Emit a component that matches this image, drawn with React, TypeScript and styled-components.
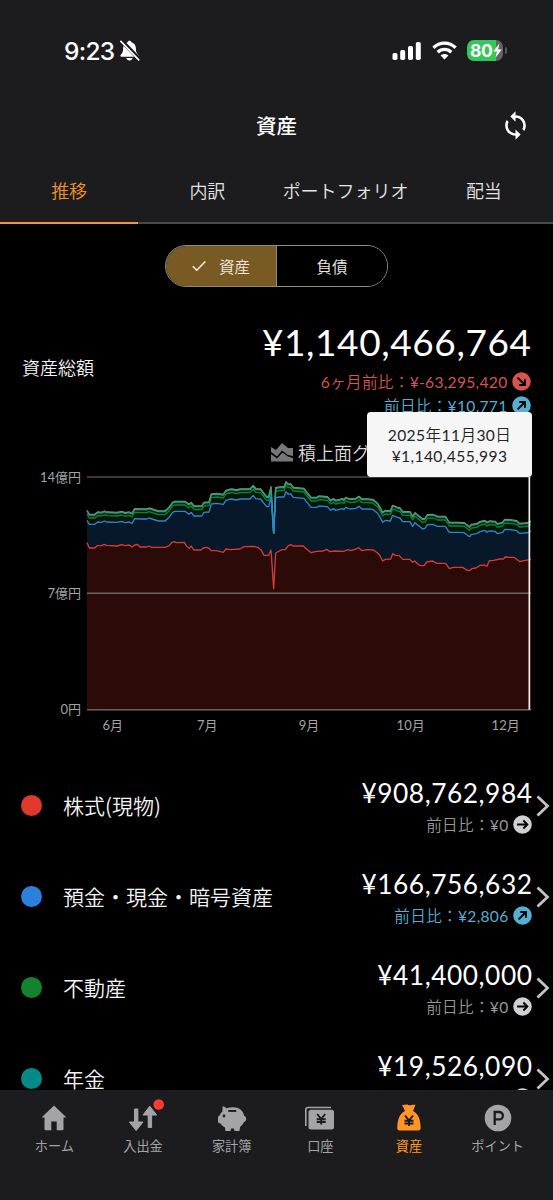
import React from "react";
import styled, { createGlobalStyle } from "styled-components";

const Global = createGlobalStyle`
  * { box-sizing: border-box; }
  body { margin: 0; background: #000; }
`;

const jp = `"Noto Sans CJK JP", sans-serif`;
const num = `Lato, "Noto Sans CJK JP", sans-serif`;

const Screen = styled.div`
  width: 553px;
  height: 1200px;
  overflow: hidden;
  display: flex;
  flex-direction: column;
  background: #000;
  color: #fff;
  font-family: ${num};
`;

const Header = styled.header`
  flex: none;
  height: 224px;
  background: #1c1c1e;
  display: flex;
  flex-direction: column;
`;

const StatusBar = styled.div`
  height: 80px;
  padding: 21px 46px 0 64px;
  display: flex;
  justify-content: space-between;
  align-items: center;
`;

const Cluster = styled.div<{ $gap: number }>`
  display: flex;
  align-items: center;
  gap: ${(p) => p.$gap}px;
`;

const Clock = styled.span`
  font: 550 24.5px/30px Inter, sans-serif;
  letter-spacing: -0.7px;
`;

const Battery = styled.div`
  display: flex;
  align-items: center;
  gap: 2px;
`;

const BatteryBody = styled.div`
  width: 36px;
  height: 21px;
  border-radius: 7px;
  background: linear-gradient(90deg, #34c759 0 29px, #636366 29px);
  display: flex;
  align-items: center;
  padding-left: 3px;
  font: 650 17.5px/21px Inter, sans-serif;
  letter-spacing: -0.3px;
`;

const BatteryCap = styled.div`
  width: 2px;
  height: 7px;
  border-radius: 0 2px 2px 0;
  background: #59595c;
`;

const TitleBar = styled.div`
  height: 90px;
  display: grid;
  grid-template-columns: 1fr auto 1fr;
  align-items: center;
  padding: 0 22px;
  & > svg { grid-column: 3; justify-self: end; }
`;

const Title = styled.h1`
  grid-column: 2;
  margin: 0;
  font: 500 20.5px/30px ${jp};
`;

const Tabs = styled.nav`
  height: 54px;
  display: grid;
  grid-template-columns: repeat(4, 1fr);
`;

const Tab = styled.div<{ $active?: boolean }>`
  display: flex;
  align-items: center;
  justify-content: center;
  height: 54px;
  white-space: nowrap;
  font: 350 18px/26px ${jp};
  color: ${(p) => (p.$active ? "#f0922b" : "#e4e4e5")};
  border-bottom: 2px solid ${(p) => (p.$active ? "#f0953a" : "#48484a")};
  padding-bottom: 12px;
`;

const Main = styled.main`
  height: 866px;
  flex: none;
  overflow: hidden;
  display: flex;
  flex-direction: column;
`;

const Segments = styled.div`
  align-self: center;
  flex: none;
  width: 223px;
  height: 42px;
  margin: 21px 0 0 0;
  border: 1px solid #8e8a86;
  border-radius: 21px;
  overflow: hidden;
  display: flex;
`;

const Segment = styled.div<{ $on?: boolean }>`
  flex: 1;
  display: flex;
  align-items: center;
  justify-content: center;
  gap: 13px;
  font: 350 15.5px/22px ${jp};
  color: #f0e8e0;
  background: ${(p) => (p.$on ? "#7a5a23" : "#000")};
  & + & { border-left: 1px solid #8e8a86; }
`;

const Summary = styled.section`
  flex: none;
  height: 141px;
  margin-top: 30px;
  padding: 0 22px;
  display: flex;
  justify-content: space-between;
`;

const SummaryLabel = styled.div`
  padding-top: 37px;
  font: 350 18px/26px ${jp};
  color: #f2f2f2;
`;

const Figures = styled.div`
  display: flex;
  flex-direction: column;
  align-items: flex-end;
`;

const Total = styled.div`
  height: 52px;
  font-size: 37px;
  line-height: 50px;
  letter-spacing: 0.6px;
  margin-right: -0.6px;
`;

const Change = styled.div<{ $color: string }>`
  display: flex;
  align-items: center;
  gap: 4.5px;
  height: 24px;
  font-family: Lato, ${jp};
  font-size: 15.6px;
  line-height: 24px;
  letter-spacing: 0.3px;
  color: ${(p) => p.$color};
`;

const Caption = styled.span`
  font-family: ${jp};
  font-weight: 350;
`;

const ChartKind = styled.div`
  flex: none;
  height: 20px;
  margin-top: -16px;
  padding-left: 271px;
  display: flex;
  align-items: center;
  gap: 5px;
  font: 350 18px/20px ${jp};
  color: #d8d8da;
  white-space: nowrap;
`;

const ChartBox = styled.div`
  position: relative;
  flex: none;
  height: 280px;
  margin-top: 3px;
  & > svg { display: block; }
`;

const Tooltip = styled.div`
  position: absolute;
  left: 367px;
  top: -53px;
  width: 165px;
  height: 65px;
  padding-top: 2px;
  border-radius: 4px;
  background: #f6f6f6;
  color: #242426;
  display: flex;
  flex-direction: column;
  align-items: center;
  justify-content: center;
  font-size: 15.6px;
  line-height: 21px;
  letter-spacing: 0.4px;
`;

const AssetList = styled.section`
  flex: none;
  margin-top: 15px;
`;

const AssetRow = styled.div`
  height: 91px;
  padding: 0 3px 0 21px;
  display: flex;
  align-items: center;
`;

const Dot = styled.span<{ $color: string }>`
  width: 21px;
  height: 21px;
  border-radius: 50%;
  background: ${(p) => p.$color};
`;

const AssetName = styled.div`
  flex: 1;
  margin-left: 21px;
  padding-bottom: 2px;
  font: 350 21px/30px ${jp};
  color: #f4f4f4;
`;

const AssetFigures = styled(Figures)`
  padding-top: 2px;
  margin-right: 4px;
`;

const Amount = styled.div`
  height: 35px;
  font-size: 26.3px;
  line-height: 32px;
  letter-spacing: 0.55px;
  margin-right: -0.5px;
`;

const FlatIcon = styled.span`
  display: flex;
  color: #cfcfd4;
`;

const BottomBar = styled.nav`
  flex: none;
  height: 110px;
  padding: 10px 11px 0 10px;
  background: #1c1c1e;
  display: grid;
  grid-template-columns: repeat(6, 1fr);
`;

const BarItem = styled.div<{ $active?: boolean }>`
  display: flex;
  flex-direction: column;
  align-items: center;
  gap: 1px;
  font: 400 13.2px/22px ${jp};
  white-space: nowrap;
  color: ${(p) => (p.$active ? "#ff9526" : "#a4a4a7")};
  & > svg { overflow: visible; }
`;

/* Chart coordinates: three units per pixel, zero value at y=734. */
const red =
  "261,233 268,249 284,249 292,242 305,242 312,238 320,241 352,243 365,239 375,242 388,240 396,246 404,240 412,238 420,246 440,246 447,243 455,247 495,247 508,242 515,233 522,230 530,233 553,232 560,244 568,250 574,243 581,255 603,255 610,249 620,247 627,250 634,257 650,257 670,262 678,252 690,254 720,252 732,245 762,244 775,248 783,254 792,271 806,271 813,255 821,371 827,264 838,258 846,254 856,254 864,243 872,239 880,243 910,243 917,250 933,263 950,259 970,258 980,253 990,260 1005,258 1030,259 1045,254 1052,257 1068,252 1076,248 1086,257 1100,254 1120,255 1133,264 1140,273 1148,288 1156,283 1172,282 1178,266 1186,271 1198,272 1208,283 1230,283 1238,292 1244,288 1258,301 1272,302 1280,291 1298,288 1310,295 1337,295 1348,311 1360,307 1388,307 1400,315 1409,317 1415,311 1428,309 1440,301 1454,300 1461,304 1468,287 1480,286 1500,282 1510,282 1515,276 1530,277 1542,277 1560,290 1572,287 1593,283";
const blue =
  "261,166 268,178 284,178 293,171 305,172 313,168 320,171 352,172 365,169 375,173 388,171 396,175 404,161 420,162 440,162 447,159 475,168 495,168 508,156 518,142 524,139 555,139 567,148 574,142 582,153 605,153 612,142 627,141 634,117 650,115 670,118 678,106 687,103 695,102 710,105 720,102 750,102 760,91 767,101 782,102 792,115 800,125 806,125 813,95 821,205 827,98 838,96 852,96 858,80 864,87 872,87 880,97 912,100 917,107 933,127 950,127 957,123 982,125 992,136 1000,131 1007,136 1027,131 1032,134 1037,127 1050,132 1068,130 1077,124 1086,132 1102,132 1118,133 1132,144 1139,155 1148,172 1156,166 1171,168 1178,151 1192,157 1200,159 1208,170 1230,170 1238,184 1245,173 1268,192 1275,190 1282,179 1298,178 1312,184 1336,184 1348,202 1370,202 1393,203 1408,215 1415,208 1430,206 1440,200 1454,196 1461,202 1468,198 1485,199 1492,206 1508,202 1514,193 1530,194 1550,197 1558,205 1575,204 1585,202 1593,198";

/* Property and pension sit a nearly constant amount above the cash line,
   except on the day of the dip, when they drop out. */
const above = (points: string, by: number) =>
  points
    .split(" ")
    .map((p) => {
      const [x, y] = p.split(",").map(Number);
      return `${x},${y - (x === 821 ? 0 : by)}`;
    })
    .join(" ");
const green = above(blue, 19);
const teal = above(blue, 28);
const top = above(blue, 30);
const area = (p: string) => `${p} 1593,734 261,734`;

const Chart = () => (
  <svg width="553" height="280" viewBox="0 0 1659 840" fontFamily={num} fontSize="39" fill="#a3a3a6">
    <path d="M261 36H1593" stroke="#4c4c4e" strokeWidth="5" />
    <polygon points={area(top)} fill="#06221f" />
    <polygon points={area(green)} fill="#021804" />
    <polygon points={area(blue)} fill="#07182a" />
    <polygon points={area(red)} fill="#2c0a08" />
    <g fill="none" strokeWidth="4" strokeLinejoin="round">
      <polyline points={red} stroke="#d43c33" />
      <polyline points={green} stroke="#128031" />
      <polyline points={top} stroke="#8d9a62" />
      <polyline points={teal} stroke="#2a9c80" />
      <polyline points={blue} stroke="#2f83d6" />
    </g>
    <path d="M261 385H1593M261 734H1593" stroke="#6a6264" strokeWidth="4.5" />
    <path d="M1588 36V734" stroke="#f4eeee" strokeWidth="5" />
    <g textAnchor="end">
      <text x="243" y="52">14億円</text>
      <text x="243" y="399">7億円</text>
      <text x="243" y="747">0円</text>
    </g>
    <g textAnchor="middle">
      <text x="338" y="794">6月</text>
      <text x="622" y="794">7月</text>
      <text x="927" y="794">9月</text>
      <text x="1232" y="794">10月</text>
      <text x="1517" y="794">12月</text>
    </g>
  </svg>
);

const angles = { down: 45, up: -45, flat: 0 };
type Trend = keyof typeof angles;

const TrendIcon = ({ trend }: { trend: Trend }) => (
  <svg width="19" height="19" viewBox="0 0 18 18">
    <circle cx="9" cy="9" r="8.800" fill="currentColor" />
    <g transform={`rotate(${angles[trend]} 9 9)`} fill="none" stroke="#000" strokeWidth="1.800">
      <path d="M3.800 9H13.400M9.800 5.200L13.600 9L9.800 12.800" />
    </g>
  </svg>
);

const colors = { down: "#d65350", up: "#56aed2", flat: "#98989b" };

const assets: { name: string; dot: string; amount: string; diff: string; trend: Trend }[] = [
  { name: "株式(現物)", dot: "#e0392b", amount: "¥908,762,984", diff: "¥0", trend: "flat" },
  { name: "預金・現金・暗号資産", dot: "#2b80dc", amount: "¥166,756,632", diff: "¥2,806", trend: "up" },
  { name: "不動産", dot: "#12842f", amount: "¥41,400,000", diff: "¥0", trend: "flat" },
  { name: "年金", dot: "#058b87", amount: "¥19,526,090", diff: "¥0", trend: "flat" },
];

const Yen = ({ x, y }: { x: number; y: number }) => (
  <path
    d={`M${x - 4} ${y - 5}l4 5l4 -5M${x} ${y}v5.500M${x - 4.5} ${y + 0.3}h9M${x - 4.5} ${y + 3}h9`}
    fill="none"
    stroke="#1c1c1e"
    strokeWidth="1.900"
  />
);

const BarIcon = ({ children }: { children: React.ReactNode }) => (
  <svg width="32" height="34" viewBox="0 0 32 34" fill="currentColor">
    {children}
  </svg>
);

export default function App() {
  return (
    <Screen>
      <Global />
      <Header>
        <StatusBar>
          <Cluster $gap={5}>
            <Clock>9:23</Clock>
            <svg width="20" height="21" viewBox="0 0 20 21">
              <path d="M9.500 .8c-1 0-1.700.6-1.900 1.400C4.600 3.100 3.200 5.400 3.100 8.500c0 4-1.200 5-2.500 6.500-.5.700-.1 1.700.7 1.700h16.400c.8 0 1.200-1 .7-1.700-1.300-1.500-2.500-2.500-2.500-6.500 0-3.100-1.500-5.400-4.500-6.300-.2-.8-.9-1.400-1.900-1.400zM6.300 18h6.400c-.3 1.500-1.500 2.500-3.200 2.500s-2.900-1-3.200-2.500z" fill="#fff" />
              <path d="M1.600 .8L19.400 19.300" stroke="#1c1c1e" strokeWidth="4" />
              <path d="M.9 1.400L18.700 19.900" stroke="#fff" strokeWidth="1.700" strokeLinecap="round" />
            </svg>
          </Cluster>
          <Cluster $gap={10}>
            <svg width="30" height="20" viewBox="0 0 30 20" fill="#fff">
              <rect x="0.500" y="12" width="5" height="7" rx="1.700" />
              <rect x="8.200" y="9" width="5" height="10" rx="1.700" />
              <rect x="16" y="5" width="5" height="14" rx="1.700" />
              <rect x="23.800" y="1" width="5" height="18" rx="1.700" />
            </svg>
            <svg width="25" height="19" viewBox="0 0 25 19" fill="none" stroke="#fff" strokeWidth="3.300">
              <path d="M1.400 6.800C7.800.6 17.200.6 23.600 6.800" />
              <path d="M5.700 11.200C9.700 7.400 15.300 7.400 19.300 11.200" />
              <path d="M12.500 18.600L8.600 14.500c2.200-2 5.600-2 7.800 0z" fill="#fff" stroke="none" />
            </svg>
            <Battery>
              <BatteryBody>
                80
                <svg width="9" height="15" viewBox="0 0 9 15">
                  <path d="M6.300.5L.3 8.400h3.500L2.700 14.500L8.700 6.500H5.200z" fill="#fff" />
                </svg>
              </BatteryBody>
              <BatteryCap />
            </Battery>
          </Cluster>
        </StatusBar>
        <TitleBar>
          <Title>資産</Title>
          <svg width="31" height="31" viewBox="0 0 24 24" fill="#fff">
            <path d="M12 4V1L8 5l4 4V6c3.310 0 6 2.690 6 6 0 1.010-.25 1.970-.7 2.800l1.460 1.460C19.540 15.030 20 13.570 20 12c0-4.420-3.580-8-8-8zm0 14c-3.310 0-6-2.690-6-6 0-1.010.25-1.970.7-2.800L5.240 7.740C4.460 8.970 4 10.430 4 12c0 4.420 3.580 8 8 8v3l4-4-4-4v3z" />
          </svg>
        </TitleBar>
        <Tabs>
          <Tab $active>推移</Tab>
          <Tab>内訳</Tab>
          <Tab>ポートフォリオ</Tab>
          <Tab>配当</Tab>
        </Tabs>
      </Header>
      <Main>
        <Segments>
          <Segment $on>
            <svg width="14" height="12" viewBox="0 0 14 12" fill="none" stroke="#f8eee4" strokeWidth="1.500">
              <path d="M.8 6.200L4.800 10.200L13.300 1.500" />
            </svg>
            資産
          </Segment>
          <Segment>負債</Segment>
        </Segments>
        <Summary>
          <SummaryLabel>資産総額</SummaryLabel>
          <Figures>
            <Total>¥1,140,466,764</Total>
            <Change $color={colors.down}>
              <span>6<Caption>ヶ月前比：</Caption>¥-63,295,420</span>
              <TrendIcon trend="down" />
            </Change>
            <Change $color={colors.up}>
              <span><Caption>前日比：</Caption>¥10,771</span>
              <TrendIcon trend="up" />
            </Change>
          </Figures>
        </Summary>
        <ChartKind>
          <svg width="22" height="20" viewBox="0 0 22 20" fill="#77777a">
            <path d="M0 5l5 3l6-7l6 5h5v8l-5-1l-6-4.500l-5 6L0 10z" />
            <path d="M0 12l6 4.500l5.500-6l5.500 4l5 1.500v3.500H0z" />
          </svg>
          積上面グラフ
        </ChartKind>
        <ChartBox>
          <Chart />
          <Tooltip>
            <span>2025<Caption>年</Caption>11<Caption>月</Caption>30<Caption>日</Caption></span>
            <span>¥1,140,455,993</span>
          </Tooltip>
        </ChartBox>
        <AssetList>
          {assets.map((a) => (
            <AssetRow key={a.name}>
              <Dot $color={a.dot} />
              <AssetName>{a.name}</AssetName>
              <AssetFigures>
                <Amount>{a.amount}</Amount>
                <Change $color={colors[a.trend]}>
                  <span><Caption>前日比：</Caption>{a.diff}</span>
                  {a.trend === "flat" ? (
                    <FlatIcon>
                      <TrendIcon trend="flat" />
                    </FlatIcon>
                  ) : (
                    <TrendIcon trend={a.trend} />
                  )}
                </Change>
              </AssetFigures>
              <svg width="14" height="22" viewBox="0 0 14 22" fill="none" stroke="#c4c4c8" strokeWidth="2.800">
                <path d="M1.500 1.500L11.500 11L1.500 20.500" />
              </svg>
            </AssetRow>
          ))}
        </AssetList>
      </Main>
      <BottomBar>
        <BarItem>
          <BarIcon>
            <path d="M16 5.500L3.500 17.500h3V29c0 .8.400 1.200 1.200 1.200h5.600V21.500h5.400v8.700h5.600c.8 0 1.200-.4 1.200-1.200V17.500h3z" />
          </BarIcon>
          ホーム
        </BarItem>
        <BarItem>
          <BarIcon>
            <g stroke="currentColor" strokeWidth="1" strokeLinejoin="round">
              <path d="M7.500 9h3.400v13h5.100L9.200 30.500L2.300 22h5.200z" />
              <path d="M21.200 27.500V15h-5.200L22.800 6.200L29.700 15h-5.100v12.500z" />
            </g>
            <circle cx="31.700" cy="4.500" r="5.300" fill="#ff3b30" />
          </BarIcon>
          入出金
        </BarItem>
        <BarItem>
          <BarIcon>
            <path d="M6.600 6.300c1.600.3 2.900 1 3.800 1.900c2-.6 4.300-.9 6.600-.9c5.900 0 10.200 3 11.200 8.800c1.200.300 2 1.400 2 2.900s-.9 2.900-2.300 3.100c-.8 2-2 3.600-3.900 4.900l-.500 4h-5l-.500-2.500h-3l-.5 2.500h-5l-.5-3.600c-1.800-.9-3.400-2.200-4.500-3.900l-2.500-1v-6l1.500-.7c.5-1.700 1.500-3.200 2.900-4.400z" />
            <path d="M12.300 10h8v1.900h-8z" fill="#1c1c1e" />
            <circle cx="8" cy="16" r="1.400" fill="#1c1c1e" />
          </BarIcon>
          家計簿
        </BarItem>
        <BarItem>
          <BarIcon>
            <path d="M7 9.700h20.500a2.500 2.500 0 0 1 2.500 2.500v14.700a2.500 2.500 0 0 1-2.500 2.500H7a2.500 2.500 0 0 1-2.500-2.500v-14.700a2.500 2.500 0 0 1 2.500-2.500z" />
            <path d="M1.800 26V9.500a2 2 0 0 1 2-2H27" fill="none" stroke="currentColor" strokeWidth="1.600" />
            <Yen x={17.200} y={19} />
          </BarIcon>
          口座
        </BarItem>
        <BarItem $active>
          <BarIcon>
            <path d="M9 4.700c2 .6 3-.2 4.500-.2s2 .8 3.500.8s2.700-1 5.500-.5L20 11c5 2.500 7.500 8 7.700 17c0 1.500-.9 2.500-2.400 2.500H6.500C5 30.500 4.200 29.500 4.200 28c.2-9 2.800-14.500 7.800-17z" />
            <Yen x={16} y={20.500} />
          </BarIcon>
          資産
        </BarItem>
        <BarItem>
          <BarIcon>
            <circle cx="16" cy="18" r="13.300" />
            <path d="M12.700 25V12h4.500a3.600 3.600 0 0 1 0 7.400h-4.500" fill="none" stroke="#1c1c1e" strokeWidth="2.300" />
          </BarIcon>
          ポイント
        </BarItem>
      </BottomBar>
    </Screen>
  );
}
